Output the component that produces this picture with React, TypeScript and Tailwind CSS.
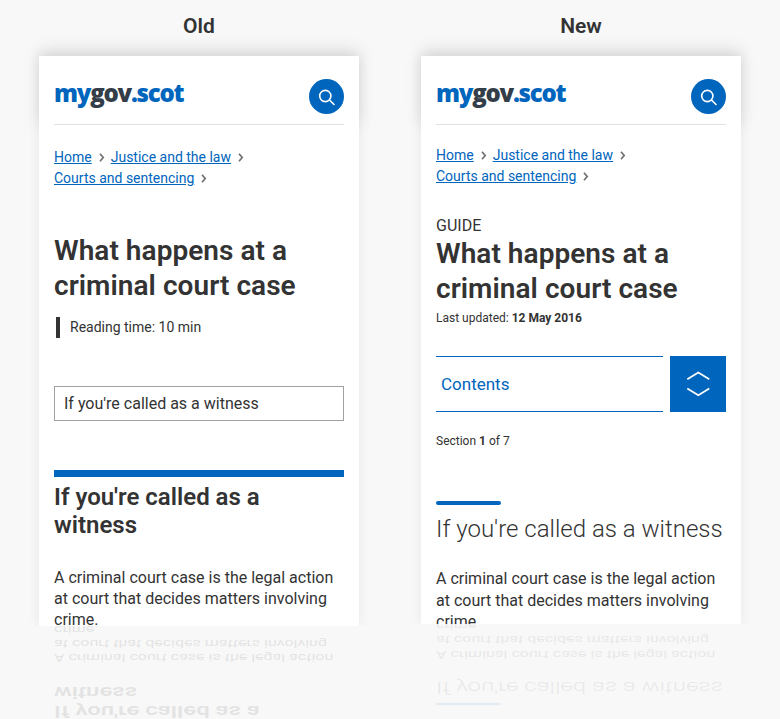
import React from "react";

const Logo = () => (
  <div className="font-['Open_Sans',sans-serif] font-extrabold text-[24px] leading-[30px] tracking-[-1.25px] text-[#0065bd] whitespace-nowrap">
    my<span className="text-[#333e48]">gov</span>.scot
  </div>
);

const SearchBtn = () => (
  <button className="w-[35px] h-[35px] rounded-full bg-[#0065bd] block">
    <svg width="35" height="35" viewBox="0 0 35 35" fill="none" stroke="white" strokeWidth="1.6" strokeLinecap="round">
      <circle cx="16.3" cy="17" r="5.6" />
      <path d="M20.5 21l4.5 4.5" />
    </svg>
  </button>
);

const Chevron = () => (
  <svg className="inline-block mx-[5px] align-baseline" width="9" height="9" viewBox="0 0 9 9" fill="none" stroke="#707070" strokeWidth="1.7">
    <path d="M3 .8l3.2 3.7L3 8.2" />
  </svg>
);

const Header = () => (
  <div className="mx-[15px] h-[69px] border-b border-[#e0e0e0] flex justify-between pt-[23px]">
    <div className="-mt-[1px]"><Logo /></div>
    <SearchBtn />
  </div>
);

const Crumbs = () => (
  <div className="mx-[15px] text-[14px] leading-[21px] text-[#0065bd]">
    <div>
      <a className="underline">Home</a><Chevron /><a className="underline">Justice and the law</a><Chevron />
    </div>
    <div>
      <a className="underline">Courts and sentencing</a><Chevron />
    </div>
  </div>
);

const Title = () => (
  <h1 className="text-[28px] leading-[35px] font-semibold text-[#333333] tracking-[0.05px]">
    What happens at a<br />criminal court case
  </h1>
);

const Para = ({ lh }: { lh: string }) => (
  <p className={`text-[16px] text-[#333333] ${lh}`}>
    A criminal court case is the legal action<br />at court that decides matters involving<br />crime.
  </p>
);

const OldBody = () => (
  <div className="h-[570px] overflow-hidden bg-white font-['Roboto',sans-serif]">
    <Header />
    <div className="h-[22px]" />
    <Crumbs />
    <div className="mx-[15px] mt-[44px]">
      <Title />
      <div className="mt-[14px] ml-[2px] border-l-4 border-[#333333] pl-[10px] text-[14px] leading-[21px] text-[#333333]">
        Reading time: 10 min
      </div>
      <div className="mt-[48px] h-[35px] border border-[#a0a0a0] pl-[9px] flex items-center text-[16px] text-[#333333]">
        If you're called as a witness
      </div>
      <div className="mt-[49px] h-[7px] bg-[#0065bd]" />
      <h2 className="mt-[6px] text-[24px] leading-[28px] font-semibold text-[#333333]">
        If you're called as a<br />witness
      </h2>
      <div className="mt-[28px]"><Para lh="leading-[21px]" /></div>
    </div>
  </div>
);

const NewBody = () => (
  <div className="h-[568px] overflow-hidden bg-white font-['Roboto',sans-serif]">
    <Header />
    <div className="h-[20px]" />
    <Crumbs />
    <div className="mx-[15px] mt-[28px]">
      <div className="text-[16px] leading-[21px] text-[#333333]">GUIDE</div>
      <div><Title /></div>
      <div className="mt-[3px] text-[12px] leading-[18px] text-[#333333]">
        Last updated: <b className="font-bold">12 May 2016</b>
      </div>
      <div className="mt-[29px] flex justify-between">
        <div className="w-[227px] h-[56px] border-y border-[#0065bd] pl-[5px] pt-[1px] flex items-center text-[17px] text-[#0065bd]">
          Contents
        </div>
        <svg className="block bg-[#0065bd]" width="56" height="56" viewBox="0 0 56 56" fill="none" stroke="white" strokeWidth="1.7">
          <path d="M17.3 23.3L28.3 16.6l11 6.7" />
          <path d="M17.3 32.6L28.3 39.3l11-6.7" />
        </svg>
      </div>
      <div className="mt-[20px] text-[12px] leading-[18px] text-[#333333]">
        Section <b className="font-bold">1</b> of 7
      </div>
      <div className="mt-[51px] h-[4px] w-[65px] rounded-full bg-[#0065bd]" />
      <h2 className="mt-[9px] text-[24px] leading-[30px] font-light text-[#333333]">
        If you're called as a witness
      </h2>
      <div className="mt-[24px]"><Para lh="leading-[21.5px]" /></div>
    </div>
  </div>
);

const Column = ({ title, children, reflection, reflH }: { title: string; children: React.ReactNode; reflection: React.ReactNode; reflH: string }) => (
  <div className="w-[320px] flex flex-col">
    <div className="h-[56px] pt-[15px] text-center text-[21px] leading-[22px] font-semibold text-[#333333] font-['Roboto',sans-serif]">
      {title}
    </div>
    <div className="relative shadow-[0_0_12px_rgba(0,0,0,0.07)]">
      <div className="absolute top-0 inset-x-0 h-[74px] shadow-[0_-6px_16px_rgba(0,0,0,0.11)]" />
      <div className="relative">{children}</div>
    </div>
    <div className={`${reflH} overflow-hidden relative -mx-[30px] px-[30px] bg-[#f8f8f8]`}>{reflection}</div>
  </div>
);

export default function App() {
  return (
    <div className="w-[780px] h-[719px] overflow-hidden bg-[#f8f8f8] flex pl-[39px] gap-[62px]">
      <Column
        title="Old"
        reflH="h-[93px]"
        reflection={
          <div className="origin-top opacity-[0.1] [transform:translateY(376px)_scaleY(-0.66)]"><OldBody /></div>
        }
      >
        <OldBody />
      </Column>
      <Column
        title="New"
        reflH="h-[95px]"
        reflection={
          <div className="origin-top opacity-[0.08] [transform:translateY(375px)_scaleY(-0.66)]"><NewBody /></div>
        }
      >
        <NewBody />
      </Column>
    </div>
  );
}
